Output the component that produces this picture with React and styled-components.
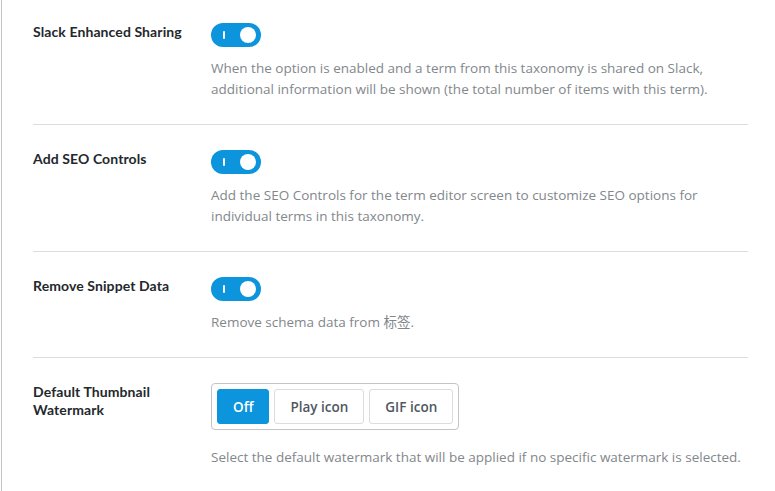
import React, { useState } from "react";
import styled, { createGlobalStyle } from "styled-components";

const Global = createGlobalStyle`
  html, body { margin: 0; padding: 0; background: #fff; }
  body { font-family: "Open Sans", "Noto Sans", "Noto Sans CJK SC", sans-serif; }
  * { box-sizing: border-box; }
`;

const Page = styled.div`
  margin-left: 1px;
  border-left: 1px solid #c3c4c7;
  min-height: 491px;
  padding: 0 27px 0 31px;
`;

const Row = styled.div`
  display: grid;
  grid-template-columns: 178px 1fr;
  padding: ${(p) => (p.$first ? "23px" : "25px")} 0 24px;
  border-bottom: ${(p) => (p.$last ? "none" : "1px solid #dcdcde")};
`;

const Label = styled.div`
  font-family: Lato, "Noto Sans", sans-serif;
  font-weight: 700;
  font-size: 14px;
  letter-spacing: 0.1px;
  line-height: 18px;
  color: #23282d;
  padding-right: 16px;
`;

const Field = styled.div`
  display: flex;
  flex-direction: column;
  align-items: flex-start;
`;

const Desc = styled.p`
  margin: ${(p) => p.$gap}px 0 0;
  font-family: "Open Sans", "Noto Sans", "Noto Sans CJK SC", sans-serif;
  font-size: 13.5px;
  line-height: 21px;
  color: #82878c;
  white-space: nowrap;
`;

const Switch = styled.button`
  position: relative;
  width: 50px;
  height: 24px;
  border: none;
  border-radius: 12px;
  padding: 0;
  background: ${(p) => (p.$on ? "#0c94dc" : "#c3c4c7")};
  cursor: pointer;
  &::before {
    content: "";
    position: absolute;
    left: 12px;
    top: 8px;
    width: 2px;
    height: 8px;
    background: #fff;
    border-radius: 1px;
    opacity: ${(p) => (p.$on ? 1 : 0)};
  }
  &::after {
    content: "";
    position: absolute;
    top: 4px;
    left: ${(p) => (p.$on ? "29px" : "4px")};
    width: 16px;
    height: 16px;
    border-radius: 50%;
    background: #fff;
  }
`;

const Group = styled.div`
  display: flex;
  gap: 5px;
  padding: 5px;
  border: 1px solid #c3c4c7;
  border-radius: 4px;
`;

const Choice = styled.button`
  height: 35px;
  padding: 0 ${(p) => p.$pad}px;
  border: 1px solid ${(p) => (p.$active ? "#0c94dc" : "#dcdcde")};
  border-radius: 3px;
  background: ${(p) => (p.$active ? "#0c94dc" : "#fff")};
  color: ${(p) => (p.$active ? "#fff" : "#50575e")};
  font-family: "Open Sans", "Noto Sans", sans-serif;
  font-weight: 600;
  font-size: 13.5px;
  cursor: pointer;
`;

function ToggleRow({ label, desc, first }) {
  const [on, setOn] = useState(true);
  return (
    <Row $first={first}>
      <Label>{label}</Label>
      <Field>
        <Switch $on={on} onClick={() => setOn(!on)} aria-label={label} />
        <Desc $gap={11}>{desc}</Desc>
      </Field>
    </Row>
  );
}

export default function App() {
  const [mark, setMark] = useState("off");
  const choices = [
    { id: "off", text: "Off", pad: 15 },
    { id: "play", text: "Play icon", pad: 15 },
    { id: "gif", text: "GIF icon", pad: 15 },
  ];
  return (
    <>
      <Global />
      <Page>
        <ToggleRow
          first
          label="Slack Enhanced Sharing"
          desc={
            <>
              When the option is enabled and a term from this taxonomy is shared on Slack,
              <br />
              additional information will be shown (the total number of items with this term).
            </>
          }
        />
        <ToggleRow
          label="Add SEO Controls"
          desc={
            <>
              Add the SEO Controls for the term editor screen to customize SEO options for
              <br />
              individual terms in this taxonomy.
            </>
          }
        />
        <ToggleRow label="Remove Snippet Data" desc="Remove schema data from 标签." />
        <Row $last>
          <Label>
            Default Thumbnail
            <br />
            Watermark
          </Label>
          <Field>
            <Group>
              {choices.map((c) => (
                <Choice
                  key={c.id}
                  $pad={c.pad}
                  $active={mark === c.id}
                  onClick={() => setMark(c.id)}
                >
                  {c.text}
                </Choice>
              ))}
            </Group>
            <Desc $gap={17}>
              Select the default watermark that will be applied if no specific watermark is selected.
            </Desc>
          </Field>
        </Row>
      </Page>
    </>
  );
}
